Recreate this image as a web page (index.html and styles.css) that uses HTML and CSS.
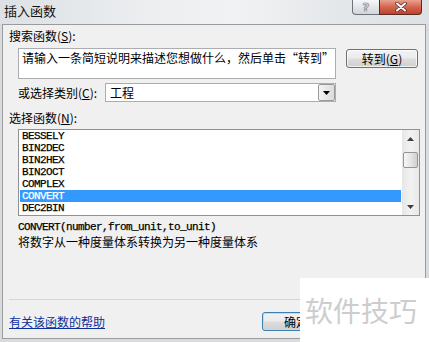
FILE: index.html
```html
<!DOCTYPE html>
<html lang="zh-CN">
<head>
<meta charset="utf-8">
<title>插入函数</title>
<link rel="stylesheet" href="styles.css">
</head>
<body>
<div class="window">
  <div class="titlebar">
    <span class="title">插入函数</span>
    <div class="caption-btns">
      <span class="cbtn help">?</span>
      <span class="cbtn close">
        <svg width="12" height="10" viewBox="0 0 12 10">
          <path d="M2 1.5L10 8.5M10 1.5L2 8.5" stroke="#5a2a22" stroke-width="3.6" stroke-linecap="round"/>
          <path d="M2 1.5L10 8.5M10 1.5L2 8.5" stroke="#ffffff" stroke-width="2" stroke-linecap="round"/>
        </svg>
      </span>
    </div>
  </div>
  <div class="panel">
    <div class="label">搜索函数(<u>S</u>):</div>
    <div class="search-row">
      <div class="search-box">请输入一条简短说明来描述您想做什么，然后单击“转到”</div>
      <button class="btn go">转到(<u>G</u>)</button>
    </div>
    <div class="cat-row">
      <span class="cat-label">或选择类别(<u>C</u>):</span>
      <div class="combo">
        <span class="combo-text">工程</span>
        <span class="combo-arrow">
          <svg width="7" height="4" viewBox="0 0 7 4"><path d="M0 0H7L3.5 4Z" fill="#000"/></svg>
        </span>
      </div>
    </div>
    <div class="label label-fn">选择函数(<u>N</u>):</div>
    <div class="listbox">
      <ul class="items">
        <li>BESSELY</li>
        <li>BIN2DEC</li>
        <li>BIN2HEX</li>
        <li>BIN2OCT</li>
        <li>COMPLEX</li>
        <li class="selected">CONVERT</li>
        <li>DEC2BIN</li>
      </ul>
      <div class="scrollbar">
        <span class="sb-btn"><svg width="7" height="4" viewBox="0 0 7 4"><path d="M0 4H7L3.5 0Z" fill="#404040"/></svg></span>
        <span class="sb-track"><span class="sb-thumb"></span></span>
        <span class="sb-btn"><svg width="7" height="4" viewBox="0 0 7 4"><path d="M0 0H7L3.5 4Z" fill="#404040"/></svg></span>
      </div>
    </div>
    <div class="syntax">CONVERT(number,from_unit,to_unit)</div>
    <div class="desc">将数字从一种度量体系转换为另一种度量体系</div>
    <div class="sep"></div>
    <div class="bottom-row">
      <a class="help-link" href="#">有关该函数的帮助</a>
      <div class="actions">
        <button class="btn ok">确定</button>
      </div>
    </div>
  </div>
</div>
<div class="watermark">软件技巧</div>
</body>
</html>
```

FILE: styles.css
```css
* { box-sizing: border-box; margin: 0; padding: 0; }
html, body { width: 429px; height: 342px; overflow: hidden; }
body {
  position: relative;
  background: #d8dce1;
  font-family: "Noto Sans CJK SC", "Noto Sans", sans-serif;
  font-size: 12px;
  color: #000;
}
u { text-decoration: underline; text-underline-offset: 1px; }

.window { display: flex; flex-direction: column; height: 342px; }

.titlebar {
  height: 24px;
  display: flex;
  justify-content: space-between;
  align-items: flex-start;
  background: linear-gradient(90deg, #dde1e5 0%, #eceef0 35%, #f1f2f3 55%, #e4e7ea 80%, #dde0e4 100%);
}
.title { font-size: 13px; line-height: 16px; padding: 3px 0 0 4px; color: #111; }
.caption-btns { display: flex; margin-right: 7px; }
.cbtn { height: 15px; display: flex; align-items: center; justify-content: center; }
.help {
  width: 27px;
  border: 1px solid #6e7378;
  border-top: none;
  border-right: none;
  border-radius: 0 0 0 4px;
  background: linear-gradient(#f6f7f8, #e3e6e9 50%, #d2d6db);
  font-family: "DejaVu Sans", sans-serif;
  font-size: 11px;
  font-weight: bold;
  line-height: 13px;
  color: #c9ced4;
  text-shadow: 0 0 1px #3c4550, 0 0 1px #3c4550;
}
.close {
  width: 43px;
  border: 1px solid #5a2a22;
  border-top: none;
  border-radius: 0 0 4px 0;
  background: linear-gradient(#e7a391, #d3664f 50%, #c1402b);
}

.panel {
  height: 315px;
  margin: 0 3px 0 2px;
  border: 1px solid #9b9b9b;
  background: #f0f0f0;
  padding: 4px 5px 0 6px;
  display: flex;
  flex-direction: column;
}
.label { line-height: 14px; }
.label-fn { margin-top: 9px; }

.search-row { display: flex; align-items: flex-start; margin-top: 5px; padding-left: 9px; }
.search-box {
  width: 318px;
  height: 31px;
  border: 1px solid #abadb3;
  background: #fff;
  padding: 2px 3px;
  line-height: 14px;
  white-space: nowrap;
  overflow: hidden;
}
.btn {
  font-family: "Noto Sans CJK SC", "Noto Sans", sans-serif;
  font-size: 12px;
  color: #000;
  height: 19px;
  line-height: 15px;
  border: 1px solid #707070;
  border-radius: 3px;
  background: linear-gradient(#f2f2f2 0%, #ebebeb 48%, #dddddd 52%, #cfcfcf 100%);
  box-shadow: inset 0 0 0 1px rgba(255,255,255,0.7);
}
.go { width: 72px; margin: 1px 0 0 10px; }

.cat-row { display: flex; align-items: center; margin-top: 4px; padding-left: 9px; }
.cat-label { width: 87px; line-height: 14px; }
.combo {
  width: 231px;
  height: 19px;
  border: 1px solid #abadb3;
  background: #fff;
  display: flex;
  align-items: center;
  justify-content: space-between;
}
.combo-text { padding-left: 4px; line-height: 14px; }
.combo-arrow {
  width: 17px;
  height: 17px;
  border: 1px solid #9a9a9a;
  border-radius: 2px;
  background: linear-gradient(90deg, #f4f4f4, #dcdcdc);
  display: flex;
  align-items: center;
  justify-content: center;
}

.listbox {
  margin: 4px 0 0 9px;
  height: 87px;
  border: 1px solid #8e9196;
  background: #fff;
  display: flex;
}
.items {
  list-style: none;
  flex: 1;
  padding: 0 1px;
}
.items li, .syntax {
  font-family: "Liberation Mono", "DejaVu Sans Mono", monospace;
  font-size: 11px;
  letter-spacing: -0.6px;
  line-height: 12px;
  height: 12px;
  -webkit-text-stroke: 0.25px currentColor;
}
.items li { padding-left: 2px; }
.items li.selected { background: #3399ff; color: #fff; }

.scrollbar {
  width: 17px;
  background: linear-gradient(90deg, #e6e6e6, #f2f2f2 50%, #e8e8e8);
  display: flex;
  flex-direction: column;
}
.sb-btn { height: 17px; display: flex; align-items: center; justify-content: center; }
.sb-track { flex: 1; padding: 5px 1px 0; }
.sb-thumb {
  display: block;
  height: 16px;
  border: 1px solid #959595;
  border-radius: 2px;
  background: linear-gradient(90deg, #f6f6f6, #e4e4e4 55%, #cfcfcf);
}

.syntax { margin: 5px 0 0 9px; }
.desc { margin: 2px 0 0 9px; line-height: 14px; }

.sep { margin: 50px -5px 0 0; height: 1px; background: #d5d5d5; }

.bottom-row { display: flex; align-items: center; margin-top: 12px; height: 19px; }
.help-link { color: #0a2f9c; line-height: 14px; text-decoration: underline; text-underline-offset: 1px; }
.actions { margin-left: auto; display: flex; margin-right: 90px; }
.ok { width: 68px; border-color: #3c7fb1; box-shadow: inset 0 0 0 1px #aee3f8; }

.watermark {
  position: absolute;
  left: 300px;
  top: 278px;
  width: 129px;
  height: 64px;
  background: #fff;
  padding-left: 5px;
  font-size: 28px;
  line-height: 64px;
  color: #cdcdcd;
  white-space: nowrap;
}
```
